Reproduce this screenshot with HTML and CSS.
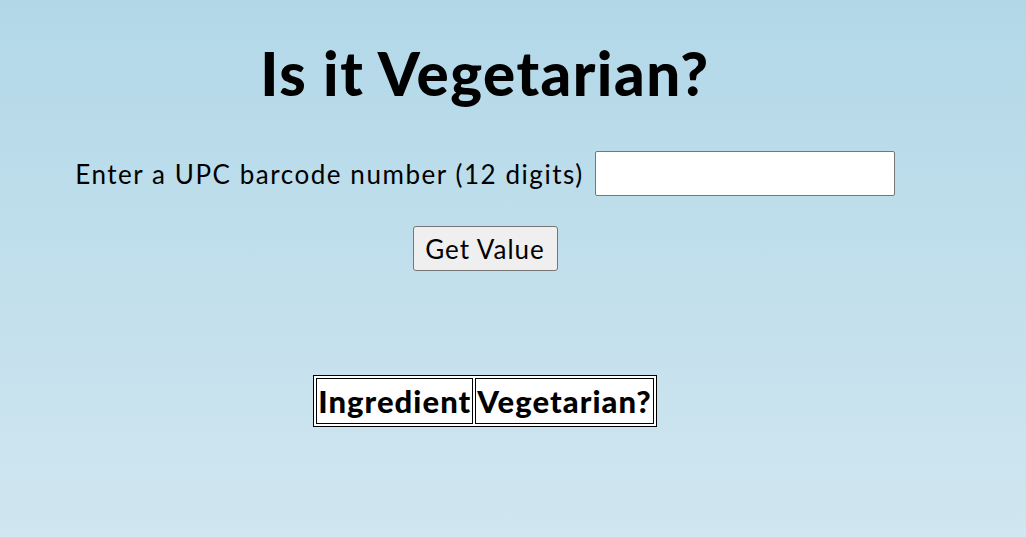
FILE: index.html
```html
<!DOCTYPE html>
<html>
<head>
<meta charset="utf-8">
<link rel="stylesheet" href="styles.css">
</head>
<body>
<main class="page">
  <h1 class="title">Is it Vegetarian?</h1>
  <div class="form-row">
    <label class="label" for="upc">Enter a UPC barcode number (12 digits)</label>
    <input class="upc-input" id="upc" type="text">
  </div>
  <button class="btn" type="button">Get Value</button>
  <table class="results">
    <tr>
      <th>Ingredient</th>
      <th>Vegetarian?</th>
    </tr>
  </table>
</main>
</body>
</html>
```

FILE: styles.css
```css
html, body {
  margin: 0;
  padding: 0;
}
body {
  min-height: 100vh;
  background: linear-gradient(to bottom, #b2d8e8 0%, #d0e6f0 100%);
  font-family: "Lato", "Open Sans", sans-serif;
  color: #000;
}
.page {
  width: 970px;
  display: flex;
  flex-direction: column;
  align-items: center;
}
.title {
  margin: 39px 0 0 0;
  font-size: 60px;
  font-weight: 900;
  line-height: 68px;
  letter-spacing: 1.5px;
}
.form-row {
  margin-top: 44px;
  display: flex;
  align-items: center;
  gap: 11px;
}
.label {
  font-size: 26px;
  letter-spacing: 1.55px;
}
.upc-input {
  width: 300px;
  height: 45px;
  box-sizing: border-box;
  border: 1px solid #767676;
  border-radius: 2px;
  background: #fff;
  font-size: 24px;
}
.btn {
  margin-top: 30px;
  width: 145px;
  height: 45px;
  box-sizing: border-box;
  font-family: inherit;
  font-size: 26px;
  letter-spacing: 1px;
  background: #efefef;
  border: 1px solid #767676;
  border-radius: 3px;
  color: #000;
}
.results {
  margin-top: 104px;
  border: 1px solid #000;
  border-spacing: 2px;
  background: #fff;
}
.results th {
  border: 1px solid #000;
  font-size: 31px;
  font-weight: 900;
  line-height: 42px;
  letter-spacing: 1.05px;
  padding: 1px;
}
```
